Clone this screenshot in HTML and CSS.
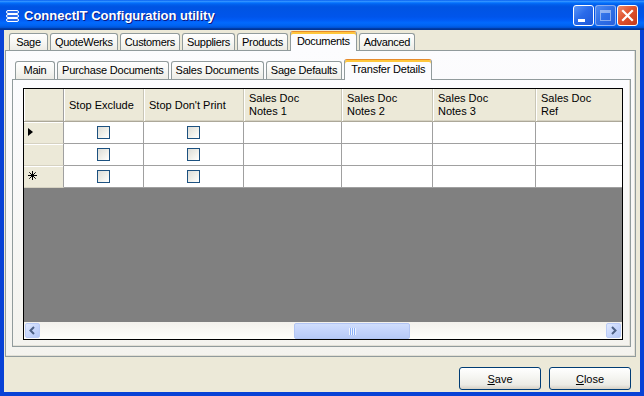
FILE: index.html
```html
<!DOCTYPE html>
<html>
<head>
<meta charset="utf-8">
<title>ConnectIT Configuration utility</title>
<link rel="stylesheet" href="styles.css">
</head>
<body>
<div class="window">
  <div class="titlebar">
    <svg class="app-icon" width="14" height="12" viewBox="0 0 14 12">
      <rect x="0.5" y="0.5" width="12" height="3" rx="1.5" fill="#2E6CEB" stroke="#fff"/>
      <rect x="0.5" y="4.5" width="12" height="3" rx="1.5" fill="#2E6CEB" stroke="#fff"/>
      <rect x="0.5" y="8.5" width="12" height="3" rx="1.5" fill="#2E6CEB" stroke="#fff"/>
    </svg>
    <span class="title">ConnectIT Configuration utility</span>
    <div class="caption-buttons">
      <span class="cbtn cbtn-min"><span class="glyph-min"></span></span>
      <span class="cbtn cbtn-max"><span class="glyph-max"></span></span>
      <span class="cbtn cbtn-close">
        <svg width="19" height="19" viewBox="0 0 19 19"><path d="M5 5 L14 14 M14 5 L5 14" stroke="#fff" stroke-width="2.2" stroke-linecap="square"/></svg>
      </span>
    </div>
  </div>

  <div class="client">
    <div class="tabctl tabctl-outer">
      <div class="tabstrip tabstrip-outer">
        <div class="tab">Sage</div>
        <div class="tab">QuoteWerks</div>
        <div class="tab">Customers</div>
        <div class="tab">Suppliers</div>
        <div class="tab">Products</div>
        <div class="tab active">Documents</div>
        <div class="tab">Advanced</div>
      </div>
      <div class="tabpage tabpage-outer">
        <div class="tabctl tabctl-inner">
          <div class="tabstrip tabstrip-inner">
            <div class="tab">Main</div>
            <div class="tab">Purchase Documents</div>
            <div class="tab">Sales Documents</div>
            <div class="tab">Sage Defaults</div>
            <div class="tab active">Transfer Details</div>
          </div>
          <div class="tabpage tabpage-inner">
            <div class="dgv">
              <div class="dgv-body">
                <div class="dgv-grid">
                  <div class="cell hdr corner"></div>
                  <div class="cell hdr">Stop Exclude</div>
                  <div class="cell hdr">Stop Don't Print</div>
                  <div class="cell hdr">Sales Doc<br>Notes 1</div>
                  <div class="cell hdr">Sales Doc<br>Notes 2</div>
                  <div class="cell hdr">Sales Doc<br>Notes 3</div>
                  <div class="cell hdr">Sales Doc<br>Ref</div>

                  <div class="cell rowhdr"><span class="current-marker"></span></div>
                  <div class="cell"><span class="checkbox"></span></div>
                  <div class="cell"><span class="checkbox"></span></div>
                  <div class="cell"></div>
                  <div class="cell"></div>
                  <div class="cell"></div>
                  <div class="cell"></div>

                  <div class="cell rowhdr"></div>
                  <div class="cell"><span class="checkbox"></span></div>
                  <div class="cell"><span class="checkbox"></span></div>
                  <div class="cell"></div>
                  <div class="cell"></div>
                  <div class="cell"></div>
                  <div class="cell"></div>

                  <div class="cell rowhdr">
                    <svg class="new-marker" width="9" height="9" viewBox="0 0 9 9"><path d="M4.5 0 V9 M0 4.5 H9 M1.3 1.3 L7.7 7.7 M7.7 1.3 L1.3 7.7" stroke="#000" stroke-width="1"/></svg>
                  </div>
                  <div class="cell"><span class="checkbox"></span></div>
                  <div class="cell"><span class="checkbox"></span></div>
                  <div class="cell"></div>
                  <div class="cell"></div>
                  <div class="cell"></div>
                  <div class="cell"></div>
                </div>
              </div>
              <div class="hscroll">
                <span class="sb-btn"><span class="sb-face">
                  <svg width="15" height="15" viewBox="0 0 15 15"><polyline points="9,4 5.5,7.5 9,11" fill="none" stroke="#4D6185" stroke-width="2"/></svg>
                </span></span>
                <span class="sb-track">
                  <span class="sb-thumb" style="margin-left:253px;width:116px"><span class="grip"></span></span>
                </span>
                <span class="sb-btn"><span class="sb-face">
                  <svg width="15" height="15" viewBox="0 0 15 15"><polyline points="6,4 9.5,7.5 6,11" fill="none" stroke="#4D6185" stroke-width="2"/></svg>
                </span></span>
              </div>
            </div>
          </div>
        </div>
      </div>
    </div>

    <div class="actions">
      <button class="btn" type="button"><u>S</u>ave</button>
      <button class="btn" type="button"><u>C</u>lose</button>
    </div>
  </div>
</div>
</body>
</html>
```

FILE: styles.css
```css
* { box-sizing: border-box; }

html, body {
  margin: 0;
  padding: 0;
}

body {
  width: 644px;
  height: 396px;
  overflow: hidden;
  font-family: "Liberation Sans", Arial, sans-serif;
  font-size: 11px;
  color: #000;
  background: #fff;
}

.window {
  width: 644px;
  height: 396px;
  display: flex;
  flex-direction: column;
}

/* ---------- title bar ---------- */
.titlebar {
  height: 30px;
  flex: none;
  display: flex;
  align-items: center;
  padding: 0 6px 0 6px;
  background: linear-gradient(to bottom,
    #0058EE 0%, #3593FF 4%, #288EFF 6%, #127DFF 8%, #036FFC 10%,
    #0262EE 14%, #0057E5 20%, #0054E3 24%, #0055EB 56%, #005BF5 66%,
    #026AFE 76%, #0062EF 86%, #0052D6 92%, #0040AB 94%, #003092 100%);
}

.app-icon {
  flex: none;
  margin-right: 4px;
  margin-top: 1px;
}

.title {
  flex: 1;
  color: #fff;
  font-weight: bold;
  font-size: 13px;
  text-shadow: 1px 1px 0 #0A1883;
  white-space: nowrap;
}

.caption-buttons {
  display: flex;
  gap: 1px;
}

.cbtn {
  position: relative;
  width: 21px;
  height: 21px;
  border: 1px solid #fff;
  border-radius: 3px;
  background: linear-gradient(135deg, #5A95F8 0%, #2A6BEA 45%, #1D57D8 100%);
}

.cbtn-max {
  border-color: rgba(255, 255, 255, 0.45);
  background: linear-gradient(135deg, #4D8AF3 0%, #2F6FE6 50%, #2760DD 100%);
}

.cbtn-close {
  background: linear-gradient(135deg, #EE8A6A 0%, #E0532F 45%, #C53A1B 100%);
}

.cbtn-close svg {
  display: block;
}

.glyph-min {
  position: absolute;
  left: 4px;
  top: 13px;
  width: 7px;
  height: 3px;
  background: #fff;
}

.glyph-max {
  position: absolute;
  left: 4px;
  top: 4px;
  width: 11px;
  height: 11px;
  border: 1px solid rgba(255, 255, 255, 0.45);
  border-top-width: 3px;
}

/* ---------- client area ---------- */
.client {
  flex: 1;
  display: flex;
  flex-direction: column;
  background: #ECE9D8;
  border: 4px solid #0842D6;
  border-top: none;
  padding: 1px 4px 0 1px;
}

.tabctl {
  display: flex;
  flex-direction: column;
}

.tabctl-outer {
  height: 326px;
  flex: none;
}

.tabctl-inner {
  height: 100%;
}

.tabstrip {
  display: flex;
  align-items: flex-end;
  gap: 2px;
  position: relative;
  z-index: 1;
  flex: none;
}

.tabstrip-outer {
  height: 19px;
  padding-left: 4px;
}

.tabstrip-inner {
  height: 20px;
  padding-left: 3px;
}

.tab {
  min-width: 39px;
  padding: 0 4px;
  border: 1px solid #919B9C;
  border-bottom: none;
  border-radius: 3px 3px 0 0;
  background: linear-gradient(to bottom, #FFFFFF 0%, #F7F7F4 50%, #ECEBE5 100%);
  text-align: center;
  white-space: nowrap;
  letter-spacing: -0.2px;
}

.tabstrip-outer .tab {
  height: 17px;
  line-height: 16px;
  letter-spacing: -0.32px;
}

.tabstrip-inner .tab {
  min-width: 40px;
  height: 18px;
  line-height: 17px;
}

.tab.active {
  padding: 0 6px;
  margin-bottom: -1px;
  border-top: 1px solid #E68B2C;
  box-shadow: inset 0 2px 0 #FFC73C;
  background: #FCFCFE;
}

.tabstrip-outer .tab.active {
  height: 20px;
  line-height: 18px;
}

.tabstrip-inner .tab.active {
  height: 21px;
  line-height: 19px;
}

.tabpage {
  border: 1px solid #919B9C;
  background: linear-gradient(to bottom, #FCFCFE 0%, #F4F3EE 100%);
  box-shadow: inset -1px -1px 0 #E2E0D6;
}

.tabpage-outer {
  flex: 1;
  display: flex;
  flex-direction: column;
  padding: 8px 4px 9px 6px;
}

.tabpage-inner {
  flex: 1;
  padding: 8px 7px 6px 10px;
}

/* ---------- data grid ---------- */
.dgv {
  height: 252px;
  border: 1px solid #000;
  display: flex;
  flex-direction: column;
  overflow: hidden;
  background: #808080;
}

.dgv-body {
  flex: 1;
  overflow: hidden;
  background: #808080;
}

.dgv-grid {
  display: grid;
  grid-template-columns: 40px 80px 100px 98px 91px 103px 100px;
  grid-template-rows: 33px 22px 22px 22px;
  width: 612px;
}

.cell {
  display: flex;
  align-items: center;
  justify-content: center;
  background: #fff;
  border-right: 1px solid #A0A0A0;
  border-bottom: 1px solid #A0A0A0;
}

.hdr {
  justify-content: flex-start;
  padding-left: 5px;
  line-height: 13px;
  background: #ECE9D8;
  border-right-color: #C9C6B6;
  border-bottom-color: #ACA899;
  box-shadow: inset 1px 0 0 #FFFFFF, inset 0 -1px 0 #D6D2C2;
  white-space: nowrap;
}

.hdr.corner {
  border-right-color: #A0A0A0;
}

.rowhdr {
  justify-content: flex-start;
  padding-left: 4px;
  background: #ECE9D8;
  border-bottom-color: #D6D2C2;
  box-shadow: inset 0 1px 0 #FFFFFF;
}

.current-marker {
  width: 0;
  height: 0;
  border-left: 5px solid #000;
  border-top: 4.5px solid transparent;
  border-bottom: 4.5px solid transparent;
  margin-top: -1px;
}

.new-marker {
  display: block;
  margin-top: -2px;
}

.checkbox {
  width: 13px;
  height: 13px;
  border: 1px solid #1C5180;
  background: linear-gradient(135deg, #DCDCD7 0%, #F0F0EA 55%, #FFFFFF 100%);
}

/* ---------- horizontal scrollbar ---------- */
.hscroll {
  height: 17px;
  flex: none;
  display: flex;
  background: linear-gradient(to bottom, #F3F1EC 0%, #FEFEFB 100%);
}

.sb-btn {
  width: 17px;
  height: 17px;
  flex: none;
  padding: 1px;
}

.sb-face {
  display: block;
  width: 15px;
  height: 15px;
  border-radius: 2px;
  border: 1px solid #BACBF6;
  background: linear-gradient(135deg, #E1EAFE 0%, #C6D5FB 55%, #B4C8F6 100%);
}

.sb-face svg {
  display: block;
  margin: -1px;
}

.sb-track {
  flex: 1;
  display: flex;
  padding-top: 1px;
}

.sb-thumb {
  display: flex;
  align-items: center;
  justify-content: center;
  height: 16px;
  border: 1px solid #B2C5F4;
  border-radius: 2px;
  background: linear-gradient(to bottom, #CFDDFC 0%, #C3D3FB 50%, #B7CAF7 100%);
}

.grip {
  width: 7px;
  height: 7px;
  background: repeating-linear-gradient(to right, #EEF4FE 0, #EEF4FE 1px, #8CB0F8 1px, #8CB0F8 2px);
}

/* ---------- buttons ---------- */
.actions {
  flex: none;
  display: flex;
  justify-content: flex-end;
  gap: 8px;
  margin-top: 10px;
  padding-right: 5px;
  height: 23px;
}

.btn {
  width: 82px;
  height: 23px;
  padding: 0;
  font-family: "Liberation Sans", Arial, sans-serif;
  font-size: 11px;
  color: #000;
  border: 1px solid #003C74;
  border-radius: 3px;
  background: linear-gradient(to bottom, #FFFFFF 0%, #F5F5F1 45%, #ECEBE5 80%, #D6D0C5 100%);
}
```
